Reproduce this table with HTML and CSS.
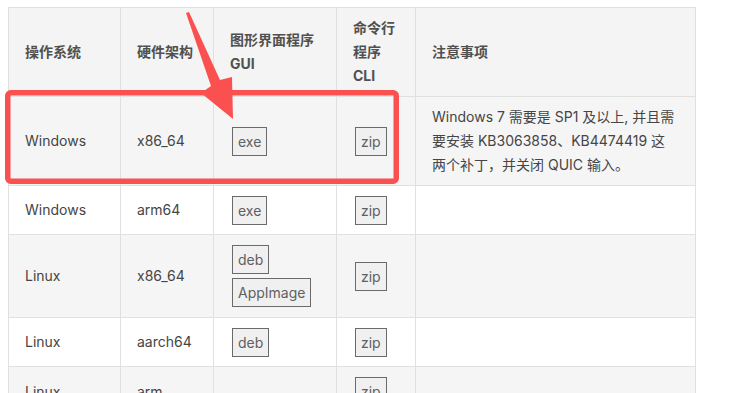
FILE: index.html
```html
<!DOCTYPE html>
<html lang="zh-CN">
<head>
    <meta charset="UTF-8">
    <meta name="viewport" content="width=device-width, initial-scale=1.0">
    <title>下载</title>
    <link rel="stylesheet" href="styles.css">
</head>
<body>

<div class="page">
    <table class="downloads">
        <colgroup>
            <col class="c-os">
            <col class="c-arch">
            <col class="c-gui">
            <col class="c-cli">
            <col class="c-note">
        </colgroup>
        <thead>
            <tr>
                <th>操作系统</th>
                <th>硬件架构</th>
                <th>图形界面程序 GUI</th>
                <th>命令行程序 CLI</th>
                <th>注意事项</th>
            </tr>
        </thead>
        <tbody>
            <tr>
                <td>Windows</td>
                <td>x86_64</td>
                <td><a class="pkg">exe</a></td>
                <td><a class="pkg">zip</a></td>
                <td>Windows 7 需要是 SP1 及以上, 并且需<br>要安装 KB3063858、KB4474419 这<br>两个补丁，并关闭 QUIC 输入。</td>
            </tr>
            <tr>
                <td>Windows</td>
                <td>arm64</td>
                <td><a class="pkg">exe</a></td>
                <td><a class="pkg">zip</a></td>
                <td></td>
            </tr>
            <tr>
                <td>Linux</td>
                <td>x86_64</td>
                <td><a class="pkg">deb</a><a class="pkg">AppImage</a></td>
                <td><a class="pkg">zip</a></td>
                <td></td>
            </tr>
            <tr>
                <td>Linux</td>
                <td>aarch64</td>
                <td><a class="pkg">deb</a></td>
                <td><a class="pkg">zip</a></td>
                <td></td>
            </tr>
            <tr>
                <td>Linux</td>
                <td>arm</td>
                <td></td>
                <td><a class="pkg">zip</a></td>
                <td></td>
            </tr>
        </tbody>
    </table>

    <!-- red markup drawn on top of the table -->
    <svg class="markup" width="729" height="393" viewBox="0 0 729 393">
        <rect x="7.75" y="92.75" width="388.5" height="88.5" rx="3" fill="none" stroke="#fa5050" stroke-width="5.5"/>
        <polygon points="186,13 189,12 220,80 232,77 233,119 201,93 211,86" fill="#fa5050"/>
    </svg>
</div>

</body>
</html>
```

FILE: styles.css
```css
body {
    margin: 0;
    background: #ffffff;
    font-family: 'Inter', 'Noto Sans CJK SC', sans-serif;
    font-size: 14px;
    color: #454545;
    overflow: hidden;
}

.page {
    position: relative;
    padding: 7px 0 0 8px;
}

.downloads {
    border-collapse: collapse;
    table-layout: fixed;
    width: 688px;
}

.c-os { width: 112px; }
.c-arch { width: 93px; }
.c-gui { width: 123px; }
.c-cli { width: 79px; }
.c-note { width: 280px; }

.downloads th,
.downloads td {
    border: 1px solid #e0e0e0;
    padding: 8px 16px;
    line-height: 24px;
    text-align: left;
    vertical-align: middle;
}

.downloads td {
    padding-bottom: 7.5px;
}

.downloads th {
    font-weight: bold;
    color: #505050;
    background-color: #f4f4f4;
}

.downloads tbody tr:nth-child(odd) td {
    background-color: #f5f5f5;
}

.pkg {
    display: inline-block;
    vertical-align: top;
    margin: 2px;
    padding: 3px 5px;
    line-height: 21px;
    border: 1px solid #6a6a6a;
    background-color: #f0f0f0;
    color: #606060;
    cursor: pointer;
}

.markup {
    position: absolute;
    top: 0;
    left: 0;
    pointer-events: none;
}
```
